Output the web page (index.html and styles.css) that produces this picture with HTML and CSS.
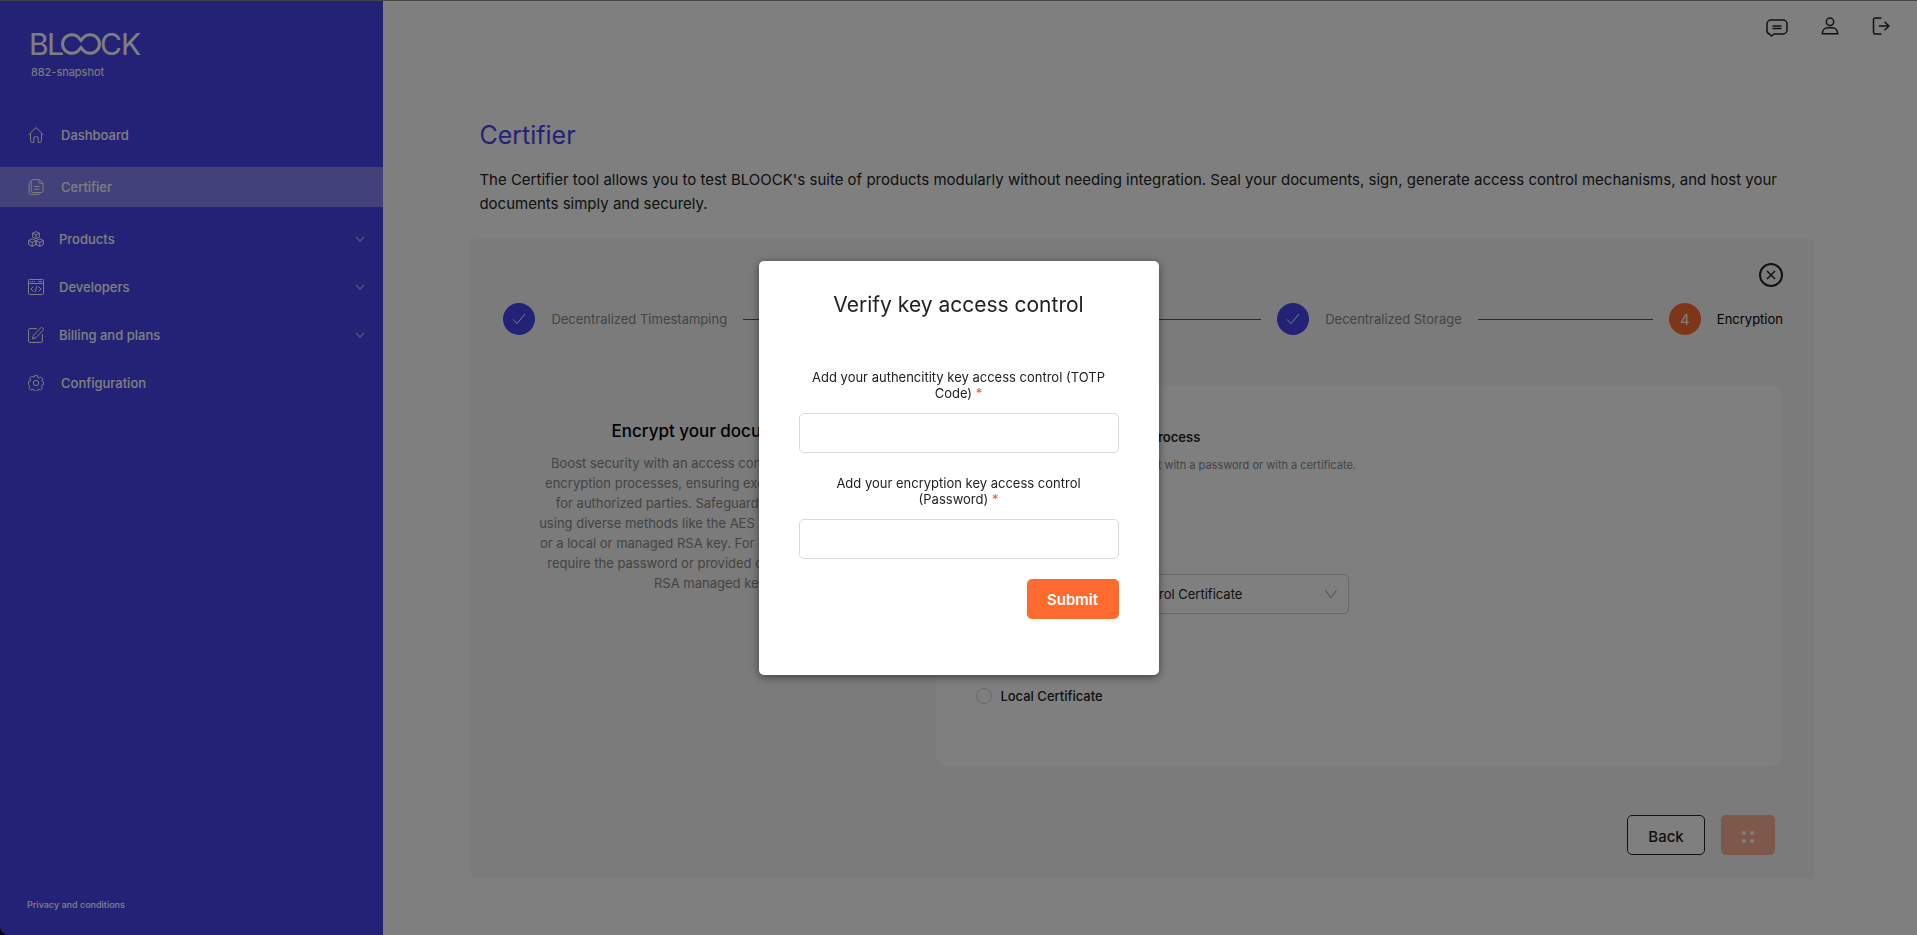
FILE: index.html
```html
<!DOCTYPE html>
<html lang="en">
<head>
<meta charset="utf-8">
<title>Certifier</title>
<link rel="stylesheet" href="styles.css">
</head>
<body>
<div class="app">
  <aside class="sidebar">
    <div class="brand">
      <svg class="logo" width="112" height="24" viewBox="0 0 112 24" role="img" aria-label="BLOOCK">
        <g class="logo-letters">
          <text x="-2" y="23">B</text><text x="16" y="23">L</text><text x="69" y="23">C</text><text x="90" y="23">K</text>
        </g>
        <path class="logo-loop" d="M50 8.500 L47.500 5.500 A9.300 9.300 0 1 0 47.500 18.500 L50 15.500 L52.500 18.500 A9.300 9.300 0 1 0 52.500 5.500 Z"/>
      </svg>
      <p class="version">882-snapshot</p>
    </div>
    <nav class="menu">
      <a class="item" href="#dashboard">
        <svg class="icon" viewBox="0 0 16 16"><path d="M.7 8 7.200 1.100a1.100 1.100 0 0 1 1.600 0L15.300 8M2.500 6.500v7a2 2 0 0 0 2 2h1.300v-4.500a1.300 1.300 0 0 1 1.300-1.300h1.800a1.300 1.300 0 0 1 1.300 1.300v4.500h1.300a2 2 0 0 0 2-2v-7"/></svg>
        <span>Dashboard</span>
      </a>
      <a class="item active" href="#certifier">
        <svg class="icon" viewBox="0 0 16 16"><path d="M5 .6h6.300L15 4.300v7.400a1.800 1.800 0 0 1-1.800 1.800H5a1.800 1.800 0 0 1-1.800-1.800V2.400A1.800 1.800 0 0 1 5 .6ZM11 .8v2.400a1.200 1.200 0 0 0 1.200 1.200h2.600M3 2.800C1.700 2.800 1 3.500 1 4.600v9a1.800 1.800 0 0 0 1.800 1.800h7.400c1 0 1.800-.6 1.800-1.800M6.300 7.500h5.200M6.300 10.200h5.200"/></svg>
        <span>Certifier</span>
      </a>
      <a class="item group" href="#products">
        <svg class="icon" viewBox="0 0 16 16"><path d="M8 .6 11.400 2.200v3.800L8 7.800 4.600 6V2.200ZM4.600 2.200 8 4l3.400-1.800M8 4v3.800M4.200 7.900l3.600 1.700v3.900l-3.600 1.900-3.600-1.900V9.600ZM.6 9.600l3.600 1.800 3.600-1.800M4.200 11.400v4M11.800 7.900l3.600 1.700v3.900l-3.600 1.900-3.600-1.900V9.600ZM8.200 9.600l3.600 1.800 3.600-1.800M11.800 11.400v4"/></svg>
        <span>Products</span>
        <svg class="chevron" viewBox="0 0 10 6"><path d="m1 1 4 4 4-4"/></svg>
      </a>
      <a class="item group" href="#developers">
        <svg class="icon" viewBox="0 0 16 16"><path d="M1.500.5h13a1 1 0 0 1 1 1v13a1 1 0 0 1-1 1h-13a1 1 0 0 1-1-1v-13a1 1 0 0 1 1-1ZM.5 4.500h15M2 2.500h1M4 2.500h1M6 2.500h1M10.500 2.500H14M5.500 7.500 3 10l2.500 2.500M10.500 7.500 13 10l-2.500 2.500M9 7l-2 6"/></svg>
        <span>Developers</span>
        <svg class="chevron" viewBox="0 0 10 6"><path d="m1 1 4 4 4-4"/></svg>
      </a>
      <a class="item group" href="#billing">
        <svg class="icon" viewBox="0 0 16 16"><path d="M9 1.600H1.700A1.100 1.100 0 0 0 .6 2.700v11.600a1.100 1.100 0 0 0 1.100 1.100h11.600a1.100 1.100 0 0 0 1.100-1.100V7M12.600.9a1.300 1.300 0 0 1 1.900 0l.5.6a1.300 1.300 0 0 1 0 1.900L7.800 10.700 4.400 11.900l1-3.500Z"/></svg>
        <span>Billing and plans</span>
        <svg class="chevron" viewBox="0 0 10 6"><path d="m1 1 4 4 4-4"/></svg>
      </a>
      <a class="item" href="#configuration">
        <svg class="icon" viewBox="0 0 16 16"><circle cx="8" cy="8" r="2.700"/><path d="M6.500.7h3l.5 1.900 1.100.4 1.700-1 2.100 2.100-1 1.700.5 1.100 1.100.3v2.500l-1.800.6-.4 1.100 1 1.800-2 2-1.800-1-1 .5-.6 1.500h-2.600l-.6-1.600-1-.5-1.900 1-1.900-1.900 1-1.900-.5-1L.6 9.500v-3l1.600-.4.5-1.100-1-1.800 2-2 1.800 1 .7-.3Z"/></svg>
        <span>Configuration</span>
      </a>
    </nav>
    <a class="legal" href="#privacy">Privacy and conditions</a>
  </aside>

  <div class="page">
    <header class="topbar">
      <button class="tool" type="button" aria-label="Messages"><svg width="22" height="22" viewBox="0 -4 22 22"><path d="M5 1h12a4 4 0 0 1 4 4v6a4 4 0 0 1-4 4H8l-2.500 2L3.500 15A3.500 3.500 0 0 1 1 11V5a4 4 0 0 1 4-4ZM6.500 7h9M6.500 9.500h9"/></svg></button>
      <button class="tool" type="button" aria-label="Account"><svg width="18" height="18" viewBox="0 0 18 18"><circle cx="9" cy="4.800" r="3.700"/><path d="M1.300 16.800c0-4 2.700-6 5.700-6h4c3 0 5.700 2 5.700 6Z"/></svg></button>
      <button class="tool" type="button" aria-label="Log out"><svg width="18" height="18" viewBox="0 0 18 18"><path d="M9.500 1H3a1.500 1.500 0 0 0-1.500 1.500v13A1.500 1.500 0 0 0 3 17h6.500M7 9h10M12.500 4.800 17 9l-4.500 4.200"/></svg></button>
    </header>

    <main class="content">
      <h1 class="title">Certifier</h1>
      <p class="lead">The Certifier tool allows you to test BLOOCK's suite of products modularly without needing integration. Seal your documents, sign, generate access control mechanisms, and host your documents simply and securely.</p>

      <section class="panel">
        <button class="close" type="button" aria-label="Close"><svg width="24" height="24" viewBox="0 0 24 24"><circle cx="12" cy="12" r="11"/><path class="thin" d="m8 8 8 8m0-8-8 8"/></svg></button>
        <ol class="steps">
          <li class="step"><span class="dot"><svg width="14" height="12" viewBox="0 0 14 12"><path d="m1 6.500 4 4L13 1"/></svg></span>Decentralized Timestamping</li>
          <li class="line"></li>
          <li class="step"><span class="dot"><svg width="14" height="12" viewBox="0 0 14 12"><path d="m1 6.500 4 4L13 1"/></svg></span>Digital Signing</li>
          <li class="line"></li>
          <li class="step"><span class="dot"><svg width="14" height="12" viewBox="0 0 14 12"><path d="m1 6.500 4 4L13 1"/></svg></span>Decentralized Storage</li>
          <li class="line"></li>
          <li class="step current"><span class="dot">4</span>Encryption</li>
        </ol>

        <div class="columns">
          <div class="intro">
            <h2 class="intro-title">Encrypt your documents</h2>
            <p class="intro-text">Boost security with an access control layers on your<br>encryption processes, ensuring exclusive data access<br>for authorized parties. Safeguard your information,<br>using diverse methods like the AES algorithm, password<br>or a local or managed RSA key. For decryption, all users<br>require the password or provided certificates, or their<br>RSA managed key.</p>
          </div>
          <div class="card">
            <h3 class="card-title">Customise your encryption process</h3>
            <p class="card-text">You can now encrypt the document with a password or with a certificate.</p>
            <label class="choice"><input type="radio" name="certificate" checked>Managed Certificate</label>
            <div class="picker">
              <select class="select" aria-label="Managed certificate"><option>My Encryption Access Control Certificate</option></select>
              <svg class="arrow" width="12" height="10" viewBox="0 0 12 10"><path d="m.5 1 5.500 8 5.500-8"/></svg>
            </div>
            <label class="choice local"><input type="radio" name="certificate">Local Certificate</label>
          </div>
        </div>

        <div class="actions">
          <button class="button back" type="button">Back</button>
          <button class="button next" type="button" aria-label="Loading"><span class="loader"><i></i><i></i><i></i><i></i></span></button>
        </div>
      </section>
    </main>
  </div>
</div>

<div class="overlay">
  <form class="modal" role="dialog" aria-labelledby="modal-title">
    <h2 class="modal-title" id="modal-title">Verify key access control</h2>
    <label class="field-label" for="totp">Add your authencitity key access control (TOTP Code) <span class="required">*</span></label>
    <input class="field" id="totp" type="text">
    <label class="field-label" for="password">Add your encryption key access control (Password) <span class="required">*</span></label>
    <input class="field" id="password" type="password">
    <button class="button submit" type="button">Submit</button>
  </form>
</div>
</body>
</html>
```
FILE: styles.css
```css
* { box-sizing: border-box; }

body {
  margin: 0;
  font-family: Inter, "Liberation Sans", sans-serif;
  font-size: 13px;
  color: #222;
  background: #000;
}

h1, h2, h3, p, ol { margin: 0; padding: 0; font-weight: 400; }
button, input, select { font: inherit; color: inherit; }
svg { display: block; fill: none; stroke: currentColor; }

.app { display: flex; min-height: 100vh; border-top: 1px solid #888; }

.sidebar {
  display: flex;
  flex-direction: column;
  flex: 0 0 20%;
  padding: 31px 0 23px;
  border-bottom-left-radius: 8px;
  font-weight: 500;
  color: #fff;
  background: #4945ee;
}
.brand { padding-left: 31px; }
.logo { overflow: visible; }
.logo-letters { fill: currentColor; stroke: none; font-size: 30px; font-weight: 400; }
.logo-loop { stroke-width: 3; }
.version { margin-top: 8px; font-size: 11px; line-height: 16px; }

.menu { display: flex; flex-direction: column; margin-top: 35px; }
.item {
  display: flex;
  align-items: center;
  height: 40px;
  margin-bottom: 12px;
  padding: 0 18px 0 28px;
  color: inherit;
  text-decoration: none;
}
.item span { padding-left: 17px; }
.group { height: 24px; margin: 8px 0 16px; }
.group span { padding-left: 15px; }
.active { background: #8682f2; }
.icon { width: 16px; height: 16px; stroke-width: 1; }
.chevron { width: 10px; height: 6px; margin-left: auto; stroke-width: 1.5; opacity: .5; }
.legal { margin-top: auto; padding-left: 27px; font-size: 9px; line-height: 14px; color: inherit; text-decoration: none; }

.page { flex: 1; min-width: 0; background: #fff; }
.topbar { display: flex; align-items: center; justify-content: flex-end; gap: 33px; padding: 14px 27px 0; }
.tool { padding: 0; border: 0; background: none; }
.tool svg { stroke-width: 1.5; }

.content { padding: 82px 102px 56px 88px; }
.title { padding-left: 8px; font-size: 25px; line-height: 32px; color: #4945ee; }
.lead { margin: 17px 24px 23px 8px; font-size: 15px; line-height: 24px; }

.panel { padding: 24px 32px; border-radius: 4px; background: #f7f7f7; }
.close { display: block; margin-left: auto; padding: 0; border: 0; background: none; }
.close svg { stroke-width: 2; }
.close .thin { stroke-width: 1.5; }

.steps { display: flex; align-items: center; gap: 16px; margin-top: 16px; list-style: none; }
.step { display: flex; align-items: center; gap: 16px; color: #888; white-space: nowrap; }
.dot { display: grid; place-items: center; width: 32px; height: 32px; border-radius: 50%; color: #fff; background: #4945ee; }
.line { flex: 1; height: 1px; background: #4945ee; }
.current { color: #000; }
.current .dot { font-size: 15px; background: #ff6b2f; }

.columns { display: flex; margin-top: 50px; }
.intro { flex: 0 0 416px; padding-top: 32px; text-align: center; }
.intro-title { font-size: 17px; font-weight: 500; line-height: 28px; color: #000; }
.intro-text { margin-top: 8px; line-height: 20px; color: #888; }
.card { flex: 1; margin-left: 17px; min-height: 381px; padding: 40px; border-radius: 12px; background: #fff; }
.card-title { font-size: 13px; font-weight: 600; line-height: 24px; }
.card-text { margin-top: 6px; font-size: 11px; line-height: 20px; color: #888; }
.choice { display: flex; align-items: center; gap: 8px; height: 24px; margin-top: 50px; font-weight: 500; }
.choice input { appearance: none; width: 16px; height: 16px; margin: 0; border: 1px solid #d0d0d0; border-radius: 50%; }
.choice input:checked { border: 5px solid #4945ee; }
.picker { display: grid; width: 373px; margin-top: 25px; }
.select { grid-area: 1 / 1; height: 40px; padding: 0 11px; border: 1px solid #d0d0d0; border-radius: 5px; appearance: none; background: #fff; }
.arrow { grid-area: 1 / 1; place-self: center end; margin-right: 12px; color: #999; }
.local { margin-top: 70px; }

.actions { display: flex; justify-content: flex-end; gap: 16px; margin-top: 49px; padding-right: 8px; }
.button { height: 40px; padding: 2px 0 0; border: 0; border-radius: 5px; font-size: 15px; }
.back { width: 78px; border: 1px solid #222; font-weight: 500; color: #222; background: #fff; }
.next { display: grid; place-items: center; width: 54px; background: #ffb199; }
.loader { display: grid; grid-template-columns: 4px 4px; gap: 4px; padding-top: 2px; }
.loader i { width: 4px; height: 4px; border-radius: 50%; background: #fff; }

.overlay { position: fixed; inset: 0; display: grid; place-items: center; background: rgba(0, 0, 0, .5); }
.modal {
  display: flex;
  flex-direction: column;
  width: 400px;
  padding: 24px 40px 56px;
  border-radius: 5px;
  background: #fff;
  box-shadow: 0 2px 8px rgba(0, 0, 0, .5);
}
.modal-title { margin-bottom: 42px; font-size: 21px; line-height: 40px; text-align: center; }
.field-label { padding: 2px 8px 0; line-height: 16px; text-align: center; }
.required { color: #ff4d30; }
.field { height: 40px; margin: 12px 0 20px; padding: 0 12px; border: 1px solid #d9d9d9; border-radius: 5px; }
.submit { align-self: flex-end; width: 92px; font-weight: 600; color: #fff; background: #ff6b2f; }
```
